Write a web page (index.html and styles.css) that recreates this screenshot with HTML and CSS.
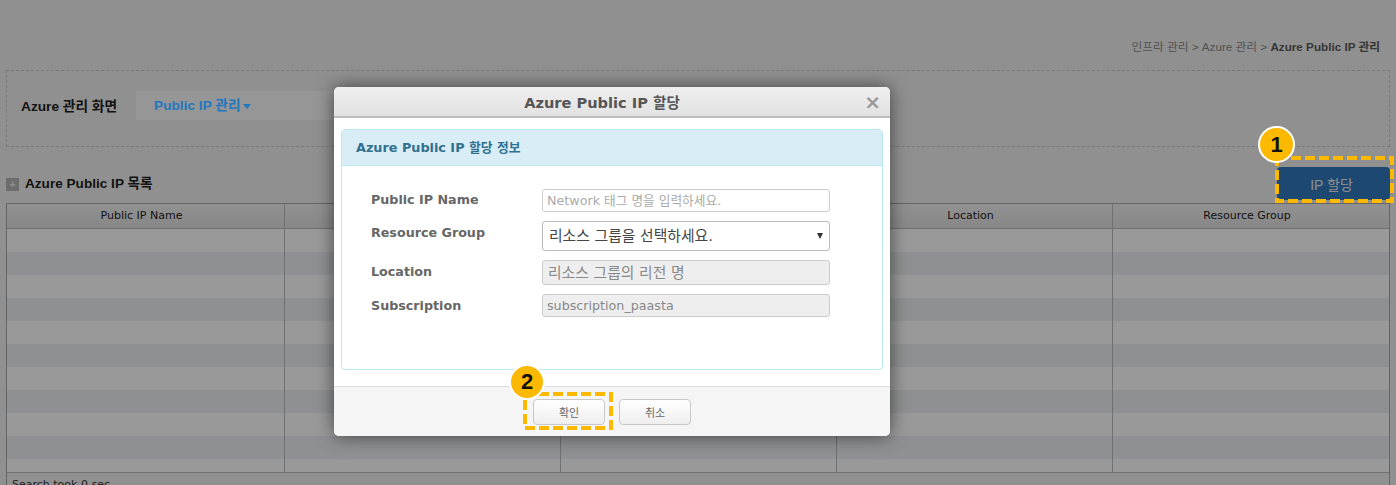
FILE: index.html
```html
<!DOCTYPE html>
<html lang="ko">
<head>
  <meta charset="UTF-8" />
  <title>Azure Public IP 관리</title>
  <link rel="stylesheet" href="styles.css">
</head>
<body>

  <div class="page">
    <div class="breadcrumb">인프라 관리 &gt; Azure 관리 &gt; <b>Azure Public IP 관리</b></div>

    <div class="filter-box">
      <span class="filter-label">Azure 관리 화면</span>
      <div class="filter-tab"><span>Public IP 관리<i class="caret"></i></span></div>
    </div>

    <div class="list-head">
      <h2><span class="fold-icon">+</span>Azure Public IP 목록</h2>
      <button class="btn-assign" type="button">IP 할당</button>
    </div>

    <div class="grid">
      <div class="grid-row grid-header">
        <div>Public IP Name</div>
        <div>Public IP</div>
        <div>Subscription</div>
        <div>Location</div>
        <div>Resource Group</div>
      </div>
      <div class="grid-body">
        <div class="grid-row"><div></div><div></div><div></div><div></div><div></div></div>
        <div class="grid-row"><div></div><div></div><div></div><div></div><div></div></div>
        <div class="grid-row"><div></div><div></div><div></div><div></div><div></div></div>
        <div class="grid-row"><div></div><div></div><div></div><div></div><div></div></div>
        <div class="grid-row"><div></div><div></div><div></div><div></div><div></div></div>
        <div class="grid-row"><div></div><div></div><div></div><div></div><div></div></div>
        <div class="grid-row"><div></div><div></div><div></div><div></div><div></div></div>
        <div class="grid-row"><div></div><div></div><div></div><div></div><div></div></div>
        <div class="grid-row"><div></div><div></div><div></div><div></div><div></div></div>
        <div class="grid-row"><div></div><div></div><div></div><div></div><div></div></div>
        <div class="grid-row last"><div></div><div></div><div></div><div></div><div></div></div>
      </div>
      <div class="grid-foot">Search took 0 sec.</div>
    </div>
  </div>

  <div class="overlay"></div>

  <div class="modal">
    <div class="modal-head">
      <span>Azure Public IP 할당</span>
      <b class="close">×</b>
    </div>
    <div class="modal-body">
      <div class="panel">
        <div class="panel-head">Azure Public IP 할당 정보</div>
        <div class="panel-body">
          <div class="field">
            <label>Public IP Name</label>
            <input type="text" placeholder="Network 태그 명을 입력하세요." />
          </div>
          <div class="field field-select">
            <label>Resource Group</label>
            <div class="select">리소스 그룹을 선택하세요.<i></i></div>
          </div>
          <div class="field field-region">
            <label>Location</label>
            <div class="readonly big">리소스 그룹의 리전 명</div>
          </div>
          <div class="field field-sub">
            <label>Subscription</label>
            <div class="readonly">subscription_paasta</div>
          </div>
        </div>
      </div>
    </div>
    <div class="modal-foot">
      <button type="button">확인</button>
      <button type="button">취소</button>
    </div>
  </div>

  <!-- 안내 표시 -->
  <svg class="mark-box mark-box-1" width="119" height="47"><rect x="2" y="2" width="115" height="43" /></svg>
  <div class="mark-num mark-num-1">1</div>
  <svg class="mark-box mark-box-2" width="90" height="38"><rect x="2" y="2" width="86" height="34" /></svg>
  <div class="mark-num mark-num-2">2</div>

</body>
</html>
```

FILE: styles.css
```css
html, body {
  margin: 0;
  height: 485px;
  overflow: hidden;
}

body {
  background-color: #f0f1f0;
  color: #222;
  font-family: 'Liberation Sans', 'Noto Sans CJK KR', sans-serif;
  position: relative;
}

.page {
  padding: 40px 6px 0;
}

.breadcrumb {
  text-align: right;
  padding-right: 10px;
  font-size: 11.7px;
  line-height: 14px;
  color: #8a8a8a;
}

.breadcrumb b {
  color: #5a5a5a;
}

.filter-box {
  margin-top: 16px;
  border: 1px dashed #ccc;
  display: flex;
  align-items: flex-start;
  padding-top: 20px;
  box-sizing: border-box;
  height: 77px;
}

.filter-label {
  flex: none;
  width: 115px;
  font-size: 13.7px;
  font-weight: bold;
  line-height: 31px;
  margin-left: 14px;
  color: #222;
}

.filter-tab {
  width: 300px;
  height: 29px;
  line-height: 29px;
  background-color: #fafafa;
  color: #2278bf;
  font-size: 13.7px;
  font-weight: bold;
  padding-left: 18px;
  box-sizing: border-box;
}

/* 글자색이 오버레이에 눌리지 않게 */
.filter-tab span {
  position: relative;
  z-index: 1;
}

.caret {
  display: inline-block;
  margin-left: 2px;
  border-left: 4px solid transparent;
  border-right: 4px solid transparent;
  border-top: 5px solid #2278bf;
  vertical-align: middle;
}

.list-head {
  display: flex;
  justify-content: space-between;
  align-items: flex-start;
  height: 56px;
}

.list-head h2 {
  margin: 28px 0 0;
  font-size: 13.6px;
  line-height: 18px;
  color: #222;
  display: flex;
  align-items: center;
}

.fold-icon {
  width: 13px;
  height: 13px;
  margin-right: 6px;
  background-color: #b5b5b5;
  color: #eee;
  font-size: 11px;
  line-height: 13px;
  text-align: center;
}

.btn-assign {
  margin: 20px 0 0;
  width: 113px;
  height: 33px;
  padding: 0 4px 0 0;
  background-color: #3079bd;
  border: 0;
  border-radius: 4px;
  color: #eee;
  font-family: inherit;
  font-size: 14px;
}

.grid {
  border: 1px solid #a9a9a9;
  border-width: 1px 1px 0;
}

.grid-row {
  display: grid;
  grid-template-columns: 277px 276px 276px 276px 1fr;
  height: 23px;
}

.grid-row > div {
  border-left: 1px solid #bbb;
  box-sizing: border-box;
}

.grid-row > div:first-child {
  border-left: 0;
}

.grid-header {
  height: 24px;
  line-height: 24px;
  text-align: center;
  font-family: 'DejaVu Sans', 'Noto Sans CJK KR', sans-serif;
  font-size: 11px;
  color: #222;
  background: linear-gradient(#f2f2f2, #e2e2e2);
  border-bottom: 1px solid #bbb;
}

.grid-header > div {
  padding-right: 8px;
}

.grid-body .grid-row:nth-child(odd) {
  background-color: #fff;
}

.grid-body .grid-row:nth-child(even) {
  background-color: #eef0f2;
}

.grid-row.last {
  height: 13px;
}

.grid-foot {
  border-top: 1px solid #bbb;
  padding: 5px 5px 0;
  font-family: 'DejaVu Sans', 'Noto Sans CJK KR', sans-serif;
  font-size: 11px;
  line-height: 14px;
  color: #333;
}

.overlay {
  position: absolute;
  inset: 0;
  background-color: rgba(0, 0, 0, 0.4);
}

.modal {
  position: absolute;
  left: 334px;
  top: 87px;
  width: 556px;
  height: 349px;
  background-color: #fff;
  border-radius: 5px;
  box-shadow: 0 0 18px rgba(0, 0, 0, 0.55);
  font-family: 'DejaVu Sans', 'Noto Sans CJK KR', sans-serif;
  display: flex;
  flex-direction: column;
  overflow: hidden;
}

.modal-head {
  height: 29px;
  line-height: 31px;
  padding-right: 20px;
  border-bottom: 2px solid #bdbdbd;
  background: linear-gradient(#eee, #e2e2e2);
  text-align: center;
  font-size: 14.6px;
  font-weight: bold;
  color: #555;
  position: relative;
}

.close {
  position: absolute;
  right: 9px;
  top: 0;
  font-size: 20px;
  color: #999;
}

.modal-body {
  flex: 1;
  padding: 11px 7px 0;
}

.panel {
  height: 241px;
  border: 1px solid #bce8f1;
  border-radius: 4px;
  box-sizing: border-box;
}

.panel-head {
  height: 35px;
  line-height: 35px;
  padding-left: 14px;
  background-color: #d9edf7;
  border-bottom: 1px solid #bce8f1;
  color: #31708f;
  font-size: 12.8px;
  font-weight: bold;
}

.panel-body {
  padding: 23px 52px 0 29px;
}

.field {
  display: flex;
  align-items: flex-start;
  margin-bottom: 9px;
}

.field label {
  width: 171px;
  flex: none;
  font-size: 12.7px;
  font-weight: bold;
  line-height: 22px;
  color: #666;
}

.field input,
.readonly {
  flex: 1;
  min-width: 0;
  height: 23px;
  padding: 0 4px;
  border: 1px solid #ccc;
  border-radius: 3px;
  box-sizing: border-box;
  font-family: inherit;
  font-size: 12.7px;
  line-height: 21px;
}

.field input::placeholder {
  color: #aaa;
}

.field-select label,
.field-region label {
  line-height: 24px;
}

.field-sub label {
  line-height: 24px;
}

.select {
  flex: 1;
  height: 30px;
  line-height: 28px;
  padding-left: 6px;
  border: 1px solid #bbb;
  border-radius: 3px;
  box-sizing: border-box;
  font-size: 14.8px;
  color: #444;
  position: relative;
}

.select i {
  position: absolute;
  right: 6px;
  top: 11px;
  border-left: 3px solid transparent;
  border-right: 3px solid transparent;
  border-top: 6px solid #333;
}

.readonly {
  background-color: #eee;
  color: #888;
}

.readonly.big {
  height: 25px;
  line-height: 23px;
  font-size: 14.8px;
  padding-left: 5px;
}

.modal-foot {
  height: 50px;
  box-sizing: border-box;
  border-top: 1px solid #ddd;
  background-color: #f5f5f5;
  display: flex;
  justify-content: center;
  gap: 14px;
  padding-top: 12px;
}

.modal-foot button {
  width: 72px;
  height: 26px;
  border: 1px solid #c8c8c8;
  border-radius: 4px;
  background: linear-gradient(#fff, #eee);
  font-family: inherit;
  font-size: 11px;
  color: #666;
  padding: 0;
}

.mark-box {
  position: absolute;
}

.mark-box rect {
  fill: none;
  stroke: #fcb900;
  stroke-width: 4;
  stroke-dasharray: 10 4;
}

.mark-box-1 {
  left: 1275px;
  top: 156px;
}

.mark-box-2 {
  left: 523px;
  top: 392px;
}

.mark-num {
  position: absolute;
  box-sizing: border-box;
  border-radius: 50%;
  background-color: #fcb900;
  border: 2px solid #fff;
  color: #111;
  font-size: 22px;
  font-weight: bold;
  text-align: center;
}

.mark-num-1 {
  left: 1258px;
  top: 126px;
  width: 37px;
  height: 37px;
  line-height: 33px;
}

.mark-num-2 {
  left: 509px;
  top: 364px;
  width: 36px;
  height: 36px;
  line-height: 32px;
}
```
